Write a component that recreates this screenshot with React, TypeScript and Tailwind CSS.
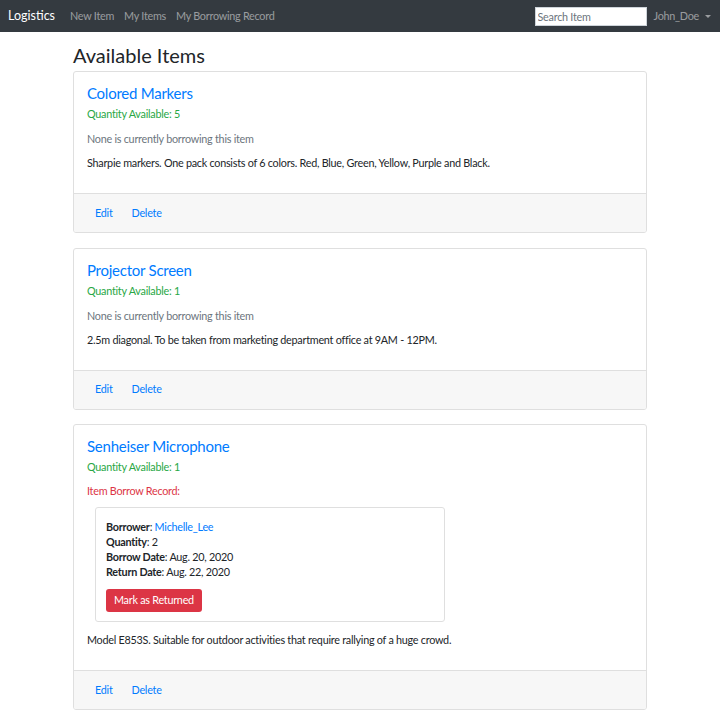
import React from "react"

const font = { fontFamily: 'Lato, "Noto Sans", sans-serif' }

type Borrow = { borrower: string; quantity: number; borrowDate: string; returnDate: string }

type Item = {
  name: string
  quantity: number
  description: string
  records: Borrow[]
}

const ITEMS: Item[] = [
  {
    name: "Colored Markers",
    quantity: 5,
    description: "Sharpie markers. One pack consists of 6 colors. Red, Blue, Green, Yellow, Purple and Black.",
    records: [],
  },
  {
    name: "Projector Screen",
    quantity: 1,
    description: "2.5m diagonal. To be taken from marketing department office at 9AM - 12PM.",
    records: [],
  },
  {
    name: "Senheiser Microphone",
    quantity: 1,
    description: "Model E853S. Suitable for outdoor activities that require rallying of a huge crowd.",
    records: [
      { borrower: "Michelle_Lee", quantity: 2, borrowDate: "Aug. 20, 2020", returnDate: "Aug. 22, 2020" },
    ],
  },
]

function Navbar() {
  return (
    <nav className="flex h-8 items-center bg-[#343a40] pl-2 pr-[9px] text-[10.8px] tracking-[-0.25px]">
      <span className="text-[12.5px] leading-none tracking-normal text-white">Logistics</span>
      <div className="ml-[15px] flex items-center gap-[10px] text-white/50">
        <span>New Item</span>
        <span>My Items</span>
        <span>My Borrowing Record</span>
      </div>
      <div className="ml-auto flex items-center">
        <input
          placeholder="Search Item"
          className="h-[19px] w-[112px] border border-[#ced4da] bg-white px-[2px] text-[10.8px] text-[#495057] outline-none placeholder:text-[#6c757d]"
        />
        <span className="ml-[7px] flex items-center text-white/50">
          John_Doe
          <span className="ml-[6px] mt-[1px] h-0 w-0 border-x-[3px] border-t-[3px] border-x-transparent border-t-white/50" />
        </span>
      </div>
    </nav>
  )
}

function ItemCard({ item }: { item: Item }) {
  return (
    <div className="overflow-hidden rounded-[3px] border border-[#dfdfdf] bg-white">
      <div className="px-[13px] pb-[21px] pt-[12px]">
        <h5 className="text-[15px] leading-[18px] text-[#007bff]">{item.name}</h5>
        <p className="mt-[3px] leading-[18px] text-[#28a745]">Quantity Available: {item.quantity}</p>
        {item.records.length === 0 ? (
          <p className="mt-[7px] leading-[18px] text-[#6c757d]">None is currently borrowing this item</p>
        ) : (
          <>
            <p className="mt-[6px] leading-[18px] text-[#dc3545]">Item Borrow Record:</p>
            {item.records.map((r) => (
              <div
                key={r.borrower}
                className="ml-[8px] mt-[7px] w-[350px] rounded-[3px] border border-[#dfdfdf] px-[10px] pb-[9px] pt-[11px]"
              >
                <div className="leading-[15px] text-[#212529]">
                  <div>
                    <b>Borrower</b>: <span className="text-[#007bff]">{r.borrower}</span>
                  </div>
                  <div>
                    <b>Quantity</b>: {r.quantity}
                  </div>
                  <div>
                    <b>Borrow Date</b>: {r.borrowDate}
                  </div>
                  <div>
                    <b>Return Date</b>: {r.returnDate}
                  </div>
                </div>
                <button className="mt-[10px] block h-[23px] rounded-[3px] bg-[#dc3545] px-[8px] text-white">
                  Mark as Returned
                </button>
              </div>
            ))}
          </>
        )}
        <p className={`${item.records.length ? "mt-[9px]" : "mt-[6px]"} leading-[18px] text-[#212529]`}>
          {item.description}
        </p>
      </div>
      <div className="flex h-[39px] items-center gap-[19px] border-t border-[#dfdfdf] bg-[#f7f7f7] px-[21px] text-[#007bff]">
        <span>Edit</span>
        <span>Delete</span>
      </div>
    </div>
  )
}

export default function App() {
  return (
    <div className="min-h-[716px] bg-white text-[10.8px] tracking-[-0.25px] text-[#212529]" style={font}>
      <Navbar />
      <main className="mx-auto w-[574px] pb-4">
        <h2 className="mt-[10px] text-[20px] leading-[26px] tracking-normal">Available Items</h2>
        <div className="mt-[3px] flex flex-col gap-[14.5px]">
          {ITEMS.map((item) => (
            <ItemCard key={item.name} item={item} />
          ))}
        </div>
      </main>
    </div>
  )
}
